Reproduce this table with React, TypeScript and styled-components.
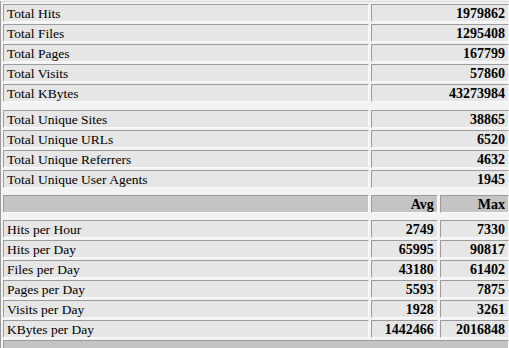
import styled, { createGlobalStyle } from "styled-components"

const GlobalStyle = createGlobalStyle`
  html, body {
    margin: 0;
    padding: 0;
    background: #f3f3f3;
    overflow: hidden;
  }
`

type Kind = "label" | "value" | "head"

const Table = styled.table`
  margin-top: 1px;
  border-collapse: separate;
  border-spacing: 2px;
  border-left: 1px solid #9a9a9a;
  border-top: 1px solid #d8d8d8;
  table-layout: fixed;
  width: 511px;
  font-family: "Liberation Serif", "Times New Roman", serif;
  color: #000;
`

const Cell = styled.td<{ $kind?: Kind; $gray?: boolean }>`
  box-sizing: border-box;
  height: 18px;
  padding: 0 3px 0 3px;
  line-height: 15px;
  white-space: nowrap;
  background: ${(p) => (p.$gray ? "#c4c4c4" : "#e6e6e6")};
  border-top: 1px solid #9c9c9c;
  border-left: 1px solid #9c9c9c;
  border-right: 1px solid #fafafa;
  border-bottom: 1px solid #fafafa;
  text-align: ${(p) => (p.$kind === "label" ? "left" : "right")};
  font-weight: ${(p) => (p.$kind === "label" ? 400 : 700)};
  font-size: ${(p) => (p.$kind === "label" ? "13.5px" : "14px")};
  vertical-align: middle;
`

const Spacer = styled.td<{ $h: number }>`
  height: ${(p) => p.$h}px;
  padding: 0;
`

const totals: [string, string][] = [
  ["Total Hits", "1979862"],
  ["Total Files", "1295408"],
  ["Total Pages", "167799"],
  ["Total Visits", "57860"],
  ["Total KBytes", "43273984"],
]

const uniques: [string, string][] = [
  ["Total Unique Sites", "38865"],
  ["Total Unique URLs", "6520"],
  ["Total Unique Referrers", "4632"],
  ["Total Unique User Agents", "1945"],
]

const perDay: [string, string, string][] = [
  ["Hits per Hour", "2749", "7330"],
  ["Hits per Day", "65995", "90817"],
  ["Files per Day", "43180", "61402"],
  ["Pages per Day", "5593", "7875"],
  ["Visits per Day", "1928", "3261"],
  ["KBytes per Day", "1442466", "2016848"],
]

const TotalRow = ({ label, value }: { label: string; value: string }) => (
  <tr>
    <Cell $kind="label">{label}</Cell>
    <Cell $kind="value" colSpan={2}>{value}</Cell>
  </tr>
)

const SepRow = ({ h = 4 }: { h?: number }) => (
  <tr>
    <Spacer colSpan={3} $h={h} />
  </tr>
)

export default function App() {
  return (
    <>
      <GlobalStyle />
      <Table>
        <colgroup>
          <col style={{ width: 365 }} />
          <col style={{ width: 67 }} />
          <col style={{ width: 69 }} />
        </colgroup>
        <tbody>
          {totals.map(([l, v]) => (
            <TotalRow key={l} label={l} value={v} />
          ))}
          <SepRow h={4} />
          {uniques.map(([l, v]) => (
            <TotalRow key={l} label={l} value={v} />
          ))}
          <SepRow h={3} />
          <tr>
            <Cell $kind="label" $gray></Cell>
            <Cell $kind="head" $gray>Avg</Cell>
            <Cell $kind="head" $gray>Max</Cell>
          </tr>
          <SepRow h={3} />
          {perDay.map(([l, a, m]) => (
            <tr key={l}>
              <Cell $kind="label">{l}</Cell>
              <Cell $kind="value">{a}</Cell>
              <Cell $kind="value">{m}</Cell>
            </tr>
          ))}
          <tr>
            <Cell $kind="label" $gray colSpan={3}></Cell>
          </tr>
        </tbody>
      </Table>
    </>
  )
}
